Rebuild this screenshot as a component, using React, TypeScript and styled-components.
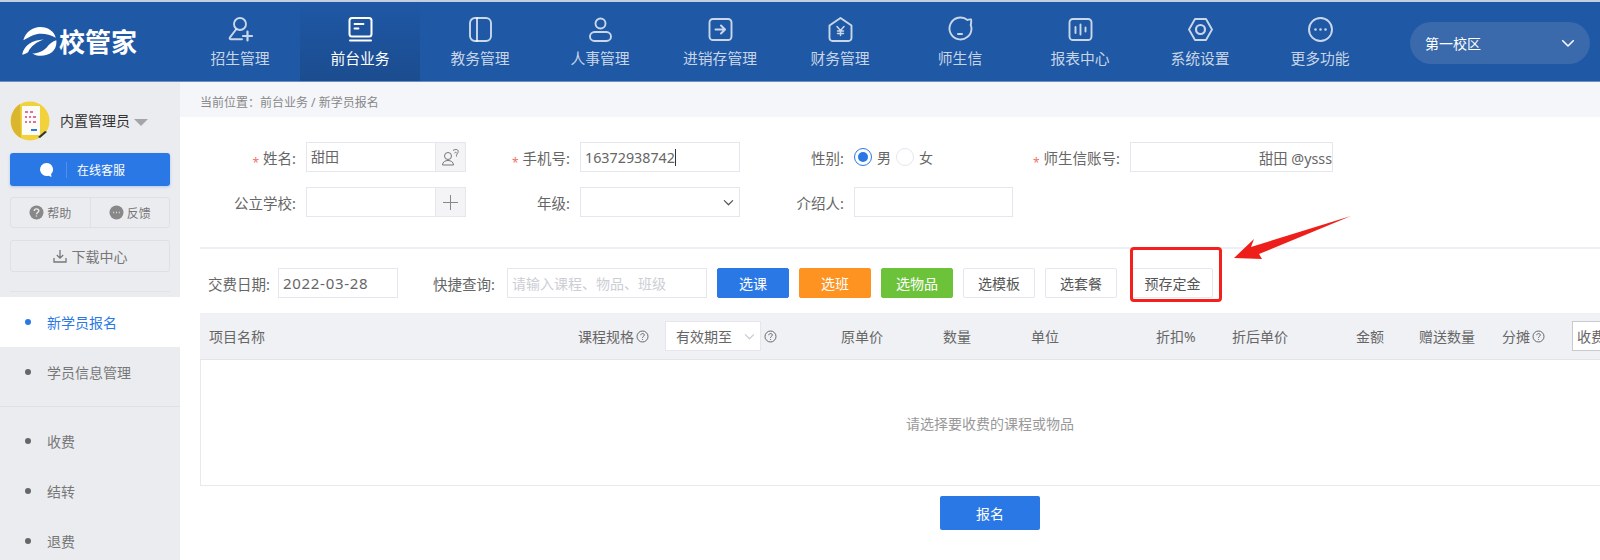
import styled, { createGlobalStyle } from "styled-components";

const GlobalStyle = createGlobalStyle`
  html, body {
    margin: 0;
    padding: 0;
    background: #fff;
  }
  * {
    box-sizing: border-box;
  }
`

const Page = styled.div`
  position: relative;
  width: 1600px;
  height: 560px;
  overflow: hidden;
  display: flex;
  flex-direction: column;
  font-family: "Noto Sans", "Noto Sans CJK SC", sans-serif;
  font-size: 14px;
  color: #666;
`

const TopBar = styled.header`
  flex: none;
  height: 82px;
  display: flex;
  background: #1f58a5;
  border-top: 2px solid #c3cfe0;
  border-bottom: 1px solid #6d8fc0;
`

const LogoBox = styled.div`
  width: 180px;
  flex: none;
  display: flex;
  align-items: center;
  padding-left: 22px;
  gap: 2px;
  color: #fff;
`

const LogoText = styled.span`
  font-size: 26px;
  line-height: 30px;
  font-weight: 700;
`

const NavItem = styled.div<{ $active?: boolean }>`
  width: 120px;
  flex: none;
  display: flex;
  flex-direction: column;
  align-items: center;
  padding-top: 14px;
  gap: 5px;
  font-size: 14.8px;
  line-height: 20px;
  color: ${(p) => (p.$active ? "#fff" : "rgba(255,255,255,.76)")};
  background: ${(p) => (p.$active ? "linear-gradient(180deg,#1f58a5 0%,#1b4c8f 100%)" : "none")};
`

const NavSvg = styled.svg`
  width: 27px;
  height: 27px;
  fill: none;
  stroke: currentColor;
  stroke-width: 1.9;
  stroke-linecap: round;
  stroke-linejoin: round;
`

const CampusPicker = styled.div`
  width: 180px;
  height: 42px;
  margin: 20px 0 0 30px;
  padding: 0 15px;
  border-radius: 21px;
  background: #3a69ac;
  color: #fff;
  display: flex;
  align-items: center;
  justify-content: space-between;
`

const Body = styled.div`
  flex: 1;
  min-height: 0;
  display: flex;
`

const Sidebar = styled.aside`
  width: 180px;
  flex: none;
  background: #ebecf0;
  display: flex;
  flex-direction: column;
  & > * {
    flex-shrink: 0;
  }
`

const UserRow = styled.div`
  height: 71px;
  padding: 19px 10px 0;
  display: flex;
  align-items: flex-start;
  gap: 10px;
  color: #333;
`

const UserName = styled.span`
  line-height: 40px;
`

const Caret = styled.i`
  width: 0;
  height: 0;
  margin: 18px 0 0 -6px;
  border-left: 7px solid transparent;
  border-right: 7px solid transparent;
  border-top: 7px solid #a3a5aa;
`

const ServiceButton = styled.div`
  height: 33px;
  margin: 0 10px;
  border-radius: 3px;
  background: #2a78e6;
  box-shadow: 0 1px 3px rgba(42, 120, 230, .3);
  color: #fff;
  font-size: 12px;
  display: flex;
  align-items: center;
  padding-left: 29px;
`

const ServiceSplit = styled.i`
  width: 1px;
  height: 16px;
  margin: 0 10px 0 12px;
  background: rgba(255, 255, 255, .18);
`

const HelpRow = styled.div`
  height: 31px;
  margin: 11px 10px 0;
  border: 1px solid #dfe0e5;
  border-radius: 3px;
  display: flex;
  font-size: 12px;
  color: #777;
`

const HelpCell = styled.div<{ $split?: boolean }>`
  flex: 1;
  display: flex;
  align-items: center;
  justify-content: center;
  gap: 3px;
  border-left: ${(p) => (p.$split ? "1px solid #dfe0e5" : "0")};
`

const DownloadButton = styled.div`
  height: 32px;
  margin: 12px 10px 0;
  border: 1px solid #dfe0e5;
  border-radius: 3px;
  display: flex;
  align-items: center;
  justify-content: center;
  gap: 5px;
  color: #777;
`

const SideRule = styled.div`
  height: 1px;
  margin: 19px 10px 5px;
  background: #e2e3e7;
`

const MenuItem = styled.div<{ $active?: boolean }>`
  height: 50px;
  display: flex;
  align-items: center;
  padding-left: 25px;
  gap: 16px;
  background: ${(p) => (p.$active ? "#fff" : "none")};
  color: ${(p) => (p.$active ? "#2a78e6" : "#777")};
`

const Dot = styled.i<{ $active?: boolean }>`
  width: 6px;
  height: 6px;
  border-radius: 50%;
  background: ${(p) => (p.$active ? "#2a78e6" : "#666")};
`

const MenuRule = styled.div`
  height: 1px;
  margin: 9px 0 9px;
  background: #dfe0e4;
`

const Main = styled.main`
  flex: 1;
  min-width: 0;
  overflow: hidden;
`

const Crumb = styled.div`
  height: 35px;
  padding: 5px 0 0 20px;
  background: #f5f6fa;
  font-size: 12px;
  display: flex;
  align-items: center;
  color: #888;
`

const Content = styled.div`
  width: 1580px;
  margin-left: 20px;
`

const FormGrid = styled.div`
  display: grid;
  grid-template-columns: 106px 160px 114px 160px 114px 159px 117px 203px;
  grid-auto-rows: 30px;
  row-gap: 15px;
  padding: 25px 0 30px;
  border-bottom: 2px solid #eeeff4;
`

const Label = styled.div`
  display: flex;
  align-items: center;
  justify-content: flex-end;
  padding-right: 10px;
  font-size: 14.5px;
  white-space: nowrap;
  color: #666;
`

const Star = styled.span`
  color: #f4715f;
  font-size: 12px;
  margin: 10px 4px 0 0;
`

const Field = styled.div<{ $right?: boolean; $muted?: boolean }>`
  height: 30px;
  border: 1px solid #e6e7ee;
  display: flex;
  align-items: center;
  justify-content: ${(p) => (p.$right ? "flex-end" : "flex-start")};
  padding: ${(p) => (p.$right ? "0" : "0 4px")};
  white-space: nowrap;
  overflow: hidden;
  color: ${(p) => (p.$muted ? "#ccced4" : "#666")};
  font-size: ${(p) => (p.$muted ? "14px" : "14.3px")};
`

const AddonField = styled.div`
  height: 30px;
  border: 1px solid #e6e7ee;
  display: flex;
`

const FieldValue = styled.span`
  flex: 1;
  padding-left: 4px;
  line-height: 28px;
`

const Addon = styled.span`
  width: 30px;
  flex: none;
  background: #f4f4f6;
  border-left: 1px solid #e6e7ee;
  color: #888;
  display: flex;
  align-items: center;
  justify-content: center;
`

const TextCaret = styled.i`
  width: 1px;
  height: 17px;
  background: #333;
`

const SelectField = styled(Field)`
  justify-content: flex-end;
  padding-right: 5px;
  color: #555;
`

const RadioRow = styled.div`
  display: flex;
  align-items: center;
  gap: 5px;
`

const Radio = styled.i<{ $on?: boolean }>`
  width: 18px;
  height: 18px;
  border-radius: 50%;
  border: ${(p) => (p.$on ? "1.5px solid #2a78e6" : "1px solid #e6e7ee")};
  display: flex;
  align-items: center;
  justify-content: center;
  &::after {
    content: "";
    display: ${(p) => (p.$on ? "block" : "none")};
    width: 10px;
    height: 10px;
    border-radius: 50%;
    background: #2a78e6;
  }
`

const Toolbar = styled.div`
  display: flex;
  align-items: center;
  height: 30px;
  margin: 19px 0 15px;
  padding-left: 8px;
  gap: 10px;
`

const ToolLabel = styled.span<{ $gap?: number; $after: number }>`
  width: 62px;
  flex: none;
  margin-left: ${(p) => p.$gap ?? 0}px;
  margin-right: ${(p) => p.$after}px;
  font-size: 14.5px;
  white-space: nowrap;
`

const DateField = styled(Field)`
  width: 120px;
  font-size: 15px;
  letter-spacing: .7px;
`

const SearchField = styled(Field)`
  width: 200px;
`

const Button = styled.div<{ $bg?: string; $wide?: boolean }>`
  width: ${(p) => (p.$wide ? 81 : 72)}px;
  height: 30px;
  flex: none;
  border-radius: 2px;
  border: 1px solid ${(p) => p.$bg ?? "#e6e7ee"};
  background: ${(p) => p.$bg ?? "#fff"};
  color: ${(p) => (p.$bg ? "#fff" : "#555")};
  display: flex;
  align-items: center;
  justify-content: center;
`

const Highlighted = styled.div`
  position: relative;
  margin-left: 5px;
`

const RedBox = styled.i`
  position: absolute;
  left: -2px;
  right: -9px;
  top: -21px;
  bottom: -4px;
  border: 3px solid #f3201b;
  border-radius: 4px;
`

const TableHead = styled.div`
  height: 47px;
  background: #f0f1f5;
  display: grid;
  grid-template-columns: 378px 87px 176px 102px 88px 125px 76px 124px 63px 83px 70px 1fr;
  align-items: center;
  white-space: nowrap;
  border-bottom: 1px solid #e4e5ea;
`

const HeadCell = styled.div<{ $first?: boolean }>`
  display: flex;
  align-items: center;
  gap: 2px;
  padding-left: ${(p) => (p.$first ? "9px" : "0")};
`

const HeadSelect = styled.div`
  width: 96px;
  height: 30px;
  margin-right: 1px;
  background: #fff;
  border: 1px solid #e6e7ee;
  display: flex;
  align-items: center;
  justify-content: space-between;
  padding: 0 5px 0 10px;
`

const CutSelect = styled(HeadSelect)`
  width: 60px;
  justify-content: flex-start;
  padding-left: 4px;
  border-color: #c9cacf;
`

const TableBody = styled.div`
  height: 126px;
  border: 1px solid #e8e9ee;
  border-top: 0;
  display: flex;
  align-items: center;
  justify-content: center;
  color: #999;
`

const SubmitRow = styled.div`
  display: flex;
  justify-content: center;
  margin-top: 10px;
`

const SubmitButton = styled.div`
  width: 100px;
  height: 34px;
  border-radius: 2px;
  background: #2a78e6;
  color: #fff;
  display: flex;
  align-items: center;
  justify-content: center;
`

const ArrowMark = styled.svg`
  position: absolute;
  left: 1228px;
  top: 210px;
  width: 130px;
  height: 55px;
`

const navIcons: { name: string; active?: boolean; icon: React.ReactNode }[] = [
    {
        name: "招生管理",
        icon: <>
            <circle cx="13" cy="8" r="6"/>
            <path d="M9 13.500 2.800 21.600c-.4.8 0 1.600 1 1.600H15"/>
            <path d="M20.500 15.500v9M16 20h9" strokeWidth="2.200"/>
        </>,
    },
    {
        name: "前台业务",
        active: true,
        icon: <>
            <rect x="2.500" y="2" width="22" height="18.500" rx="2.500" strokeWidth="2"/>
            <path d="M7.500 8h9M7.500 12.500h4" strokeWidth="1.800"/>
            <path d="M3 24.500h21" strokeWidth="2"/>
        </>,
    },
    {
        name: "教务管理",
        icon: <>
            <rect x="3" y="2" width="21" height="23" rx="5"/>
            <path d="M10 2v23"/>
        </>,
    },
    {
        name: "人事管理",
        icon: <>
            <circle cx="13.500" cy="7.500" r="5"/>
            <rect x="3" y="16" width="21" height="9" rx="4.500"/>
        </>,
    },
    {
        name: "进销存管理",
        icon: <>
            <rect x="2.500" y="3" width="22" height="21" rx="3.500"/>
            <path d="M8.500 13.500h9M14 9.500l4 4-4 4" strokeWidth="2"/>
        </>,
    },
    {
        name: "财务管理",
        icon: <>
            <path d="M13.500 2 24.500 9.500v12.500a3 3 0 0 1-3 3h-16a3 3 0 0 1-3-3V9.500z"/>
            <path d="M10 10.500l3.500 4 3.500-4M13.500 14.500v5M10.500 15h6M10.500 17.500h6" strokeWidth="1.500"/>
        </>,
    },
    {
        name: "师生信",
        icon: <>
            <path d="M20.500 4A11 11 0 1 0 24.500 12.500c0-1.500-.4-2.500-.8-3.400.6-2 .6-3.600.4-5.600-1.200-.2-2.400-.1-3.600.5z"/>
            <path d="M11 18h4" strokeWidth="2"/>
        </>,
    },
    {
        name: "报表中心",
        icon: <>
            <rect x="2.500" y="3" width="22" height="21" rx="3.500"/>
            <path d="M8.500 11v6M13.500 8.500v10M18.500 11.500v4" strokeWidth="1.900"/>
        </>,
    },
    {
        name: "系统设置",
        icon: <>
            <path d="M8 3h11l6 10.500-6 10.500H8L2 13.500z"/>
            <circle cx="13.500" cy="13.500" r="4.500" strokeWidth="2.200"/>
        </>,
    },
    {
        name: "更多功能",
        icon: <>
            <circle cx="13.500" cy="13.500" r="11.500"/>
            <path d="M8.500 13.500h.01M13.500 13.500h.01M18.500 13.500h.01" strokeWidth="2.600"/>
        </>,
    },
]

function Chevron(props: { size?: number; color?: string }) {
    const size = props.size ?? 12
    return <svg width={size} height={size} viewBox="0 0 12 12" fill="none" stroke={props.color ?? "currentColor"}
                strokeWidth="1.300" strokeLinecap="round" strokeLinejoin="round">
        <path d="M1.500 4 6 8.500 10.500 4"/>
    </svg>
}

function HintIcon() {
    return <svg width="13" height="13" viewBox="0 0 13 13" fill="none" stroke="#666" strokeWidth="1">
        <circle cx="6.500" cy="6.500" r="5.500"/>
        <path d="M4.800 5.200c0-2.200 3.500-2.200 3.500-.1 0 1.300-1.800 1.300-1.800 2.700M6.500 9.200v.8"/>
    </svg>
}

function LogoMark() {
    return <svg width="35" height="30" viewBox="0 0 29 25" fill="#fff">
        <path d="M1 11C3 4 9 0 15 0c7 0 12 4 13 9-5-3-11-4-16-3-4 1-7 3-11 5z"/>
        <path d="M28.500 11c1 8-5 13-13 13-3 0-5-1-7-2 5 0 9-2 12-5 2-3 5-5 8-6z"/>
        <path d="M0 23C2 15 8 11 18 10.500c-6 2-11 6-13 10.500-2 1-4 2-5 2z"/>
    </svg>
}

function Avatar() {
    return <svg width="40" height="40" viewBox="0 0 40 40">
        <circle cx="20" cy="20" r="19.500" fill="#f1d13c"/>
        <path d="M10 3c-6 4-9 10-9 17 0 8 4 14 10 17z" fill="#d9b62e"/>
        <rect x="12" y="5" width="18" height="29" fill="#fdfdf6"/>
        <path d="M15 11h3M20 11h3M15 16h2M19 16h2M23 16h3M15 21h2M19 21h2M23 21h3" stroke="#d2409a" strokeWidth="1.600"/>
        <path d="M21 29h6" stroke="#2a78e6" strokeWidth="2"/>
        <path d="M30 37l7-6-2-1-7 6z" fill="#333"/>
    </svg>
}

function App() {
    return <Page>
        <GlobalStyle/>
        <TopBar>
            <LogoBox>
                <LogoMark/>
                <LogoText>校管家</LogoText>
            </LogoBox>
            {navIcons.map((item) => (
                <NavItem key={item.name} $active={item.active}>
                    <NavSvg viewBox="0 0 27 27">{item.icon}</NavSvg>
                    {item.name}
                </NavItem>
            ))}
            <CampusPicker>
                第一校区
                <Chevron size={14}/>
            </CampusPicker>
        </TopBar>
        <Body>
            <Sidebar>
                <UserRow>
                    <Avatar/>
                    <UserName>内置管理员</UserName>
                    <Caret/>
                </UserRow>
                <ServiceButton>
                    <svg width="15" height="16" viewBox="0 0 15 16" fill="#fff">
                        <path d="M7.500 1a6.500 6.500 0 1 0 2 12.700L12.500 15l-.4-2.900A6.500 6.500 0 0 0 7.500 1z"/>
                    </svg>
                    <ServiceSplit/>
                    在线客服
                </ServiceButton>
                <HelpRow>
                    <HelpCell>
                        <svg width="15" height="15" viewBox="0 0 15 15">
                            <circle cx="7.500" cy="7.500" r="7" fill="#888"/>
                            <path d="M5.300 6c0-2.800 4.500-2.800 4.500-.2 0 1.700-2.300 1.600-2.300 3.400M7.500 10.600v1" stroke="#ebecf0"
                                  strokeWidth="1.400" fill="none"/>
                        </svg>
                        帮助
                    </HelpCell>
                    <HelpCell $split>
                        <svg width="15" height="15" viewBox="0 0 15 15">
                            <circle cx="7.500" cy="7.500" r="7" fill="#888"/>
                            <path d="M4.300 7.500h.9M7 7.500h.9M9.800 7.500h.9" stroke="#ebecf0" strokeWidth="1.500"/>
                        </svg>
                        反馈
                    </HelpCell>
                </HelpRow>
                <DownloadButton>
                    <svg width="14" height="14" viewBox="0 0 14 14" fill="none" stroke="#777" strokeWidth="1.300">
                        <path d="M7 1v8M3.800 6 7 9.200 10.200 6M1 9v4h12V9"/>
                    </svg>
                    下载中心
                </DownloadButton>
                <SideRule/>
                <MenuItem $active><Dot $active/>新学员报名</MenuItem>
                <MenuItem><Dot/>学员信息管理</MenuItem>
                <MenuRule/>
                <MenuItem><Dot/>收费</MenuItem>
                <MenuItem><Dot/>结转</MenuItem>
                <MenuItem><Dot/>退费</MenuItem>
            </Sidebar>
            <Main>
                <Crumb>当前位置：前台业务 / 新学员报名</Crumb>
                <Content>
                    <FormGrid>
                        <Label><Star>*</Star>姓名:</Label>
                        <AddonField>
                            <FieldValue>甜田</FieldValue>
                            <Addon>
                                <svg width="20" height="18" viewBox="0 0 20 18" fill="none" stroke="#777" strokeWidth="1">
                                    <circle cx="7" cy="8" r="3.500"/>
                                    <path d="M1.500 17c0-6 11-6 11 0zM12 2.500c3-2 6-1 5 2-.5 1.500-2 2-1.500 4M13.500 5c1-1 2-1 1.800.3"/>
                                </svg>
                            </Addon>
                        </AddonField>
                        <Label><Star>*</Star>手机号:</Label>
                        <Field>16372938742<TextCaret/></Field>
                        <Label>性别:</Label>
                        <RadioRow>
                            <Radio $on/>男<Radio/>女
                        </RadioRow>
                        <Label><Star>*</Star>师生信账号:</Label>
                        <Field $right>甜田 @ysss</Field>

                        <Label>公立学校:</Label>
                        <AddonField>
                            <FieldValue/>
                            <Addon>
                                <svg width="17" height="17" viewBox="0 0 17 17" stroke="#888" strokeWidth="1">
                                    <path d="M8.500 1v15M1 8.500h15"/>
                                </svg>
                            </Addon>
                        </AddonField>
                        <Label>年级:</Label>
                        <SelectField><Chevron size={11}/></SelectField>
                        <Label>介绍人:</Label>
                        <Field/>
                    </FormGrid>
                    <Toolbar>
                        <ToolLabel $after={-2}>交费日期:</ToolLabel>
                        <DateField>2022-03-28</DateField>
                        <ToolLabel $gap={25} $after={2}>快捷查询:</ToolLabel>
                        <SearchField $muted>请输入课程、物品、班级</SearchField>
                        <Button $bg="#2a78e6">选课</Button>
                        <Button $bg="#fe9322">选班</Button>
                        <Button $bg="#6cc33a">选物品</Button>
                        <Button>选模板</Button>
                        <Button>选套餐</Button>
                        <Highlighted>
                            <Button $wide>预存定金</Button>
                            <RedBox/>
                        </Highlighted>
                    </Toolbar>
                    <TableHead>
                        <HeadCell $first>项目名称</HeadCell>
                        <HeadCell>课程规格<HintIcon/></HeadCell>
                        <HeadCell>
                            <HeadSelect>有效期至<Chevron size={11} color="#ccc"/></HeadSelect>
                            <HintIcon/>
                        </HeadCell>
                        <HeadCell>原单价</HeadCell>
                        <HeadCell>数量</HeadCell>
                        <HeadCell>单位</HeadCell>
                        <HeadCell>折扣%</HeadCell>
                        <HeadCell>折后单价</HeadCell>
                        <HeadCell>金额</HeadCell>
                        <HeadCell>赠送数量</HeadCell>
                        <HeadCell>分摊<HintIcon/></HeadCell>
                        <HeadCell><CutSelect>收费</CutSelect></HeadCell>
                    </TableHead>
                    <TableBody>请选择要收费的课程或物品</TableBody>
                    <SubmitRow>
                        <SubmitButton>报名</SubmitButton>
                    </SubmitRow>
                </Content>
            </Main>
        </Body>
        <ArrowMark viewBox="0 0 130 55">
            <path d="M6 48 26 29 23 37 123 6 31 44 34 49z" fill="#ee1f1a"/>
        </ArrowMark>
    </Page>
}

export default App
